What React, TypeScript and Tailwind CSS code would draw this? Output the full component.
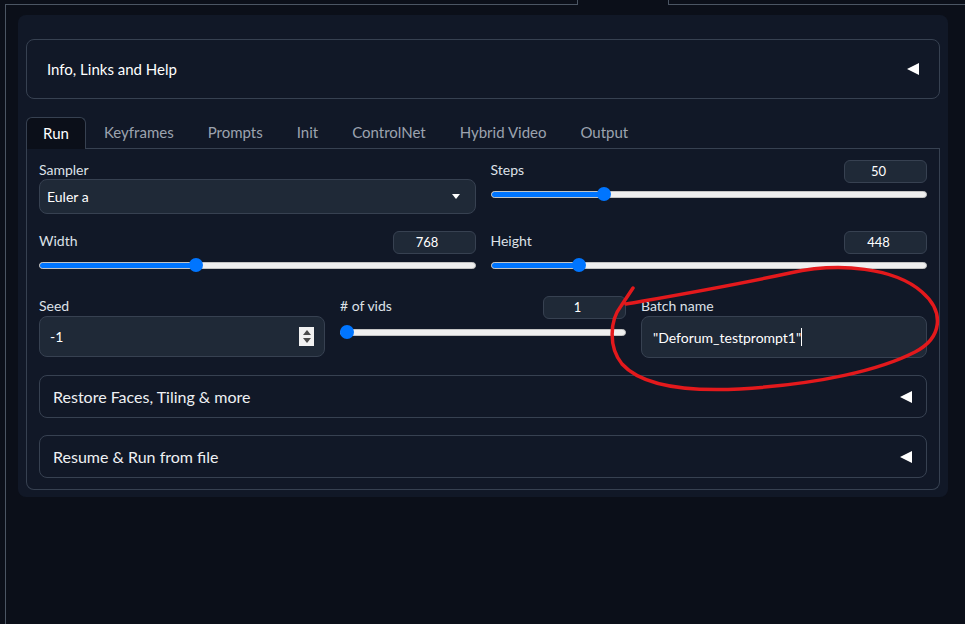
import React from "react";

const tabs = ["Run", "Keyframes", "Prompts", "Init", "ControlNet", "Hybrid Video", "Output"];

function LeftTriangle() {
  return (
    <svg width="12" height="12" viewBox="0 0 12 12">
      <polygon points="12,0 12,12 0,6" fill="#ffffff" />
    </svg>
  );
}

function Slider({ pct }: { pct: number }) {
  return (
    <div className="relative h-full flex items-center">
      <div className="relative w-full h-[7px] rounded-full bg-[#efefef] border border-[#c4c4c4] overflow-hidden">
        <div className="absolute left-0 top-0 bottom-0 bg-[#0075ff]" style={{ width: `calc(7px + ${pct} * (100% - 14px))` }} />
      </div>
      <div
        className="absolute top-1/2 -translate-y-1/2 w-[14px] h-[14px] rounded-full bg-[#0075ff]"
        style={{ left: `calc(${pct} * (100% - 14px))` }}
      />
    </div>
  );
}

function NumberBox({ value }: { value: string }) {
  return (
    <div className="w-[83px] h-[23px] rounded-md bg-[#1f2937] border border-[#374151] flex items-center justify-center pr-[14px] text-[13px] text-white">
      {value}
    </div>
  );
}

function SliderBlock({ label, value, pct }: { label: string; value: string; pct: number }) {
  return (
    <div>
      <div className="flex justify-between items-start h-[23px]">
        <span className="text-[14px] leading-[19px] text-[#dde1e7]">{label}</span>
        <NumberBox value={value} />
      </div>
      <div className="h-[22px]">
        <Slider pct={pct} />
      </div>
    </div>
  );
}

function Accordion({ title }: { title: string }) {
  return (
    <div className="h-[43px] rounded-lg border border-[#374151] flex items-center justify-between pl-[13px] pr-[14px]">
      <span className="text-[16px] text-[#eef0f3]">{title}</span>
      <LeftTriangle />
    </div>
  );
}

export default function App() {
  return (
    <div className="relative w-[965px] h-[624px] overflow-hidden bg-[#0b0f19] font-['Lato','Noto_Sans',sans-serif] text-[#e5e7eb]">
      {/* outer tab frame */}
      <div className="flex h-[5px] pl-[5px]">
        <div className="w-[572px] border-b border-[#4b5563]" />
        <div className="w-[92px] border-x border-[#4b5563]" />
        <div className="flex-1 border-b border-[#4b5563]" />
      </div>
      <div className="ml-[5px] border-l border-[#4b5563] h-[619px] pl-[12px] pr-[17px] pt-[10px]">
        <div className="rounded-lg bg-[#111827] px-[8px] pt-[24px] pb-[7px]">
          {/* Info accordion */}
          <div className="h-[60px] rounded-lg border border-[#374151] flex items-center justify-between pl-[20px] pr-[20px]">
            <span className="text-[15px] text-white">Info, Links and Help</span>
            <LeftTriangle />
          </div>

          {/* tabs */}
          <div className="mt-[18px] flex h-[32px]">
            <div className="w-[60px] rounded-t-md border border-b-0 border-[#374151] bg-[#0b0f19] flex items-center justify-center text-[15px] text-white">
              Run
            </div>
            <div className="flex-1 flex pl-[1px] border-b border-[#374151]">
              {tabs.slice(1).map((t) => (
                <div key={t} className="px-[17px] flex items-center text-[15px] text-[#9ca3af]">
                  {t}
                </div>
              ))}
            </div>
          </div>

          {/* tab content */}
          <div className="border-x border-b border-[#374151] rounded-b-lg px-[12px] pt-[11px] pb-[11px]">
            <div className="grid grid-cols-2 gap-x-[15px]">
              <div>
                <div className="text-[14px] leading-[19px] text-[#dde1e7]">Sampler</div>
                <div className="h-[35px] rounded-lg bg-[#1f2937] border border-[#374151] flex items-center justify-between pl-[7px] pr-[15px]">
                  <span className="text-[14px] text-white">Euler a</span>
                  <svg width="8" height="5" viewBox="0 0 8 5">
                    <polygon points="0,0 8,0 4,5" fill="#ffffff" />
                  </svg>
                </div>
              </div>
              <SliderBlock label="Steps" value="50" pct={0.251} />
            </div>

            <div className="grid grid-cols-2 gap-x-[15px] mt-[17px]">
              <SliderBlock label="Width" value="768" pct={0.356} />
              <SliderBlock label="Height" value="448" pct={0.194} />
            </div>

            <div className="grid grid-cols-3 gap-x-[15px] mt-[20px]">
              <div>
                <div className="h-[20px] text-[14px] leading-[20px] text-[#dde1e7]">Seed</div>
                <div className="h-[41px] rounded-lg bg-[#1f2937] border border-[#374151] flex items-center justify-between pl-[10px] pr-[10px]">
                  <span className="text-[14px] text-white">-1</span>
                  <div className="w-[15px] h-[19px] bg-[#f1f1f1] flex flex-col items-center justify-center gap-[3px]">
                    <svg width="8" height="5" viewBox="0 0 8 5">
                      <polygon points="4,0 8,5 0,5" fill="#4a4a4a" />
                    </svg>
                    <svg width="8" height="5" viewBox="0 0 8 5">
                      <polygon points="0,0 8,0 4,5" fill="#4a4a4a" />
                    </svg>
                  </div>
                </div>
              </div>
              <div>
                <div className="flex justify-between items-start h-[23px]">
                  <span className="text-[14px] leading-[20px] text-[#dde1e7]"># of vids</span>
                  <NumberBox value="1" />
                </div>
                <div className="h-[26px]">
                  <Slider pct={0} />
                </div>
              </div>
              <div>
                <div className="h-[20px] text-[14px] leading-[20px] text-[#dde1e7]">Batch name</div>
                <div className="h-[42px] rounded-lg bg-[#1f2937] border border-[#374151] flex items-center pl-[11px]">
                  <span className="text-[14px] text-white">"Deforum_testprompt1"</span>
                  <span className="w-px h-[18px] bg-white" />
                </div>
              </div>
            </div>

            <div className="mt-[17px]">
              <Accordion title="Restore Faces, Tiling & more" />
            </div>
            <div className="mt-[17px]">
              <Accordion title="Resume & Run from file" />
            </div>
          </div>
        </div>
      </div>

      {/* red hand-drawn annotation */}
      <svg className="absolute inset-0 pointer-events-none" width="965" height="624" viewBox="0 0 965 624">
        <path
          d="M626 304 C 660 298, 720 288, 790 273 C 840 262, 895 268, 922 292 C 945 312, 942 338, 915 352 C 880 370, 820 384, 740 389 C 680 392, 640 384, 622 364 C 608 347, 610 320, 621 306 L 633 288"
          fill="none"
          stroke="#e3191c"
          strokeWidth="3.5"
          strokeLinecap="round"
          strokeLinejoin="round"
        />
      </svg>
    </div>
  );
}
